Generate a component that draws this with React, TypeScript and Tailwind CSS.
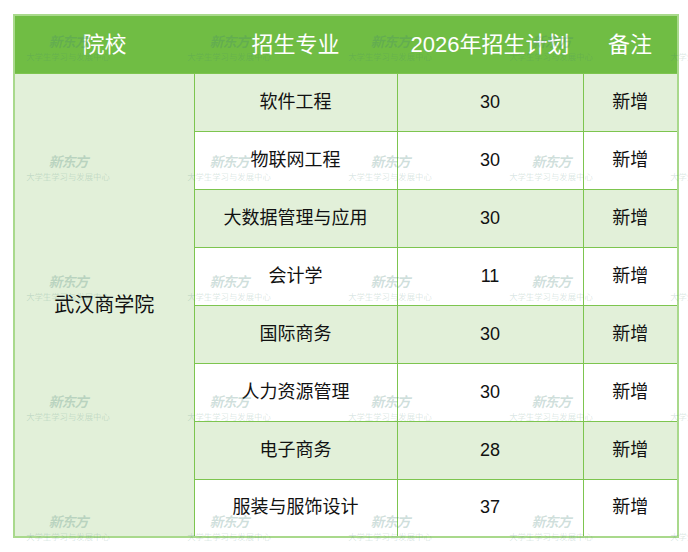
const rows = [
  { major: "软件工程", plan: "30" },
  { major: "物联网工程", plan: "30" },
  { major: "大数据管理与应用", plan: "30" },
  { major: "会计学", plan: "11" },
  { major: "国际商务", plan: "30" },
  { major: "人力资源管理", plan: "30" },
  { major: "电子商务", plan: "28" },
  { major: "服装与服饰设计", plan: "37" },
]

// watermark grid, repeats every 161px across and 120px down
const marks: { x: number; y: number }[] = []
for (let j = 0; j < 5; j++) {
  for (let i = 0; i < 5; i++) {
    marks.push({ x: 68 + i * 161, y: 40 + j * 120 })
  }
}

const Watermark = ({ x, y }: { x: number; y: number }) => (
  <div
    className="absolute flex flex-col items-center -translate-x-1/2 -translate-y-1/2 leading-none whitespace-nowrap"
    style={{ left: x, top: y + 8 }}
  >
    <span className="text-[14px] font-bold italic tracking-[-1px] text-[#3f7f74]/25">新东方</span>
    <span className="mt-[4px] text-[8.4px] text-[#3f7f74]/20">大学生学习与发展中心</span>
  </div>
)

export default function App() {
  return (
    <div
      className="relative w-[688px] h-[552px] bg-white overflow-hidden pt-[14px] pl-[13px]"
      style={{ fontFamily: '"Liberation Sans", "Noto Sans CJK SC", sans-serif' }}
    >
      <table className="border-collapse table-fixed w-[664px] border-2 border-[#a9d98c]">
        <colgroup>
          <col className="w-[180px]" />
          <col className="w-[203px]" />
          <col className="w-[186px]" />
          <col className="w-[95px]" />
        </colgroup>
        <thead>
          <tr className="h-[58px] bg-[#70bd44] text-white text-[22px]">
            <th className="font-normal">院校</th>
            <th className="font-normal">招生专业</th>
            <th className="font-normal">2026年招生计划</th>
            <th className="font-normal">备注</th>
          </tr>
        </thead>
        <tbody className="text-[18px] text-[#111111]">
          {rows.map((r, i) => (
            <tr key={i} className={`h-[58px] ${i % 2 === 0 ? "bg-[#e2f0d9]" : "bg-white"}`}>
              {i === 0 && (
                <td rowSpan={rows.length} className="bg-[#e2f0d9] border border-[#7dc54f] text-center text-[20px]">
                  武汉商学院
                </td>
              )}
              <td className="border border-[#7dc54f] text-center">{r.major}</td>
              <td className="border border-[#7dc54f] text-center">{r.plan}</td>
              <td className="border border-[#7dc54f] text-center">新增</td>
            </tr>
          ))}
        </tbody>
      </table>

      <div className="absolute inset-0 pointer-events-none">
        {marks.map((m, i) => (
          <Watermark key={i} x={m.x} y={m.y} />
        ))}
      </div>
    </div>
  )
}
